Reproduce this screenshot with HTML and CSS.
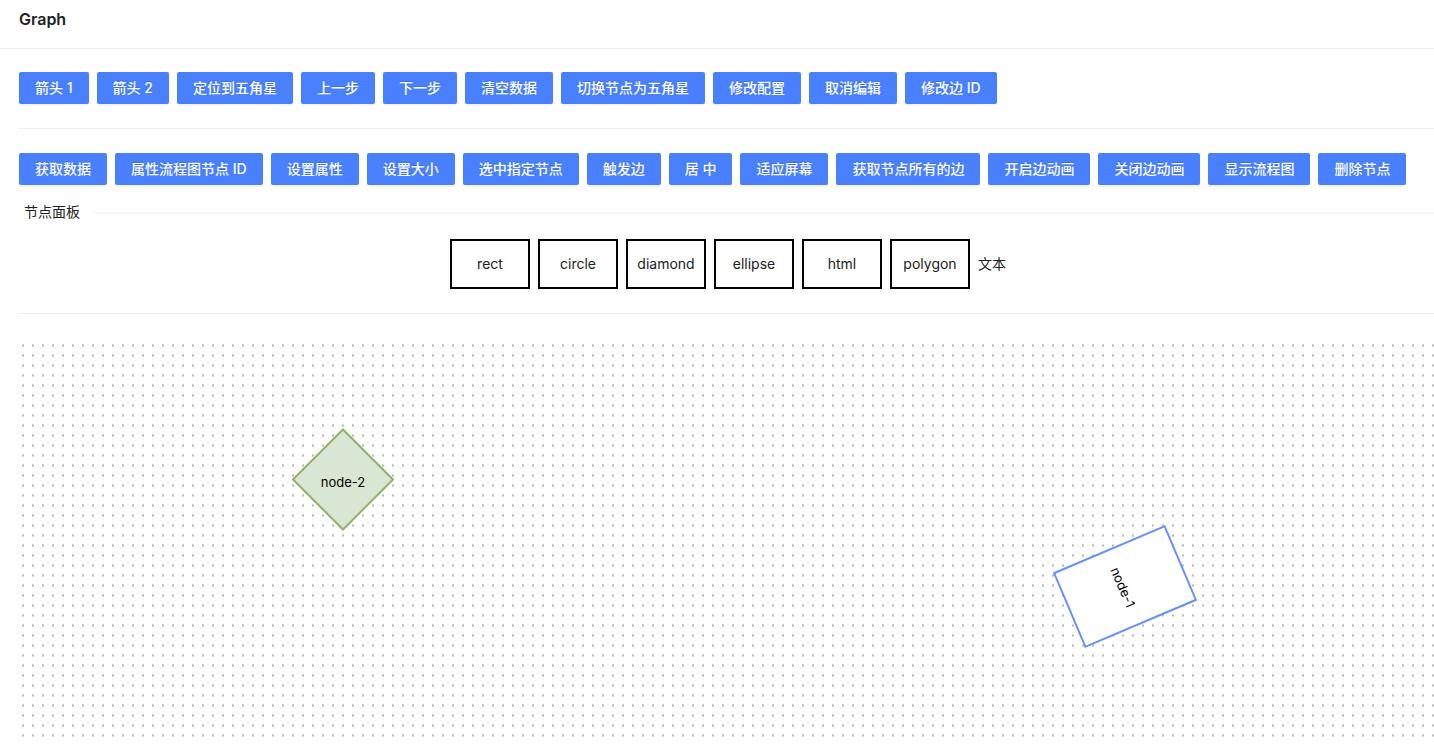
FILE: index.html
```
<!DOCTYPE html>
<html lang="zh-CN">
<head>
<meta charset="utf-8">
<title>Graph</title>
<link rel="stylesheet" href="styles.css">
</head>
<body>
<header class="header"><h1 class="title">Graph</h1></header>
<main class="content">
  <div class="toolbar">
    <button class="btn" type="button">箭头 1</button>
    <button class="btn" type="button">箭头 2</button>
    <button class="btn" type="button">定位到五角星</button>
    <button class="btn" type="button">上一步</button>
    <button class="btn" type="button">下一步</button>
    <button class="btn" type="button">清空数据</button>
    <button class="btn" type="button">切换节点为五角星</button>
    <button class="btn" type="button">修改配置</button>
    <button class="btn" type="button">取消编辑</button>
    <button class="btn" type="button">修改边 ID</button>
  </div>
  <hr class="divider">
  <div class="toolbar">
    <button class="btn" type="button">获取数据</button>
    <button class="btn" type="button">属性流程图节点 ID</button>
    <button class="btn" type="button">设置属性</button>
    <button class="btn" type="button">设置大小</button>
    <button class="btn" type="button">选中指定节点</button>
    <button class="btn" type="button">触发边</button>
    <button class="btn" type="button">居 中</button>
    <button class="btn" type="button">适应屏幕</button>
    <button class="btn" type="button">获取节点所有的边</button>
    <button class="btn" type="button">开启边动画</button>
    <button class="btn" type="button">关闭边动画</button>
    <button class="btn" type="button">显示流程图</button>
    <button class="btn" type="button">删除节点</button>
  </div>
  <div class="panel-heading"><h2 class="panel-title">节点面板</h2></div>
  <div class="panel">
    <div class="shape">rect</div>
    <div class="shape">circle</div>
    <div class="shape">diamond</div>
    <div class="shape">ellipse</div>
    <div class="shape">html</div>
    <div class="shape">polygon</div>
    <div>文本</div>
  </div>
  <hr class="divider">
  <div class="canvas">
    <svg class="graph" width="100%" height="100%">
      <defs>
        <pattern id="grid" width="10" height="10" patternUnits="userSpaceOnUse">
          <rect class="dot" x="3" y="6.4" width="2" height="2.2"/>
        </pattern>
      </defs>
      <rect width="100%" height="100%" fill="url(#grid)"/>
      <g transform="translate(324 141.5)">
        <polygon class="node-diamond" points="0,-50 50,0 0,50 -50,0"/>
        <text class="node-label" y="2">node-2</text>
      </g>
      <g transform="translate(1106 248.5) rotate(67)">
        <rect class="node-rect" x="-40" y="-60" width="80" height="120"/>
        <text class="node-label" y="2">node-1</text>
      </g>
    </svg>
  </div>
</main>
</body>
</html>
```
FILE: styles.css
```
* { box-sizing: border-box; }

body {
  margin: 0;
  background: #fff;
  color: #212121;
  font: 14px/22px Inter, "Noto Sans CJK SC", sans-serif;
  overflow-x: hidden;
}

.header {
  padding: 8px 19px 18px;
  border-bottom: 1px solid #ededed;
}

.title {
  margin: 0;
  font-size: 16px;
  line-height: 22px;
  font-weight: 600;
}

.content { padding: 23px 0 0 19px; }

.toolbar {
  display: flex;
  flex-wrap: wrap;
  gap: 8px;
}

.btn {
  height: 32px;
  padding: 0 16px;
  border: 0;
  border-radius: 2px;
  background: #4880ff;
  color: #fff;
  font: inherit;
  font-weight: 500;
  white-space: nowrap;
  text-shadow: 0 -1px 0 rgba(0, 0, 0, 0.12);
  box-shadow: 0 2px 0 rgba(0, 0, 0, 0.04);
}

.divider {
  margin: 24px 0;
  border: 0;
  border-top: 1px solid #eee;
}

.panel-heading {
  display: flex;
  align-items: center;
  gap: 13px;
  padding-left: 5px;
  margin: 16px 0;
}

.panel-heading::after {
  content: "";
  flex: 1;
  margin-top: 2px;
  border-top: 2px solid #f6f6f6;
}

.panel-title {
  margin: 0;
  font-size: 14px;
  font-weight: 400;
}

.panel {
  display: flex;
  align-items: center;
  justify-content: center;
  gap: 8px;
  padding-left: 3px;
}

.shape {
  display: flex;
  align-items: center;
  justify-content: center;
  width: 80px;
  height: 50px;
  border: 2px solid #000;
}

.canvas { height: 400px; }
.graph { display: block; }
.dot { fill: #bcbcbc; }

.node-diamond {
  fill: #d9e6d4;
  stroke: #8fb065;
  stroke-width: 2;
}

.node-rect {
  fill: #fff;
  stroke: #6690f5;
  stroke-width: 2;
}

.node-label {
  fill: #000;
  font-size: 13px;
  text-anchor: middle;
  dominant-baseline: central;
}
```
